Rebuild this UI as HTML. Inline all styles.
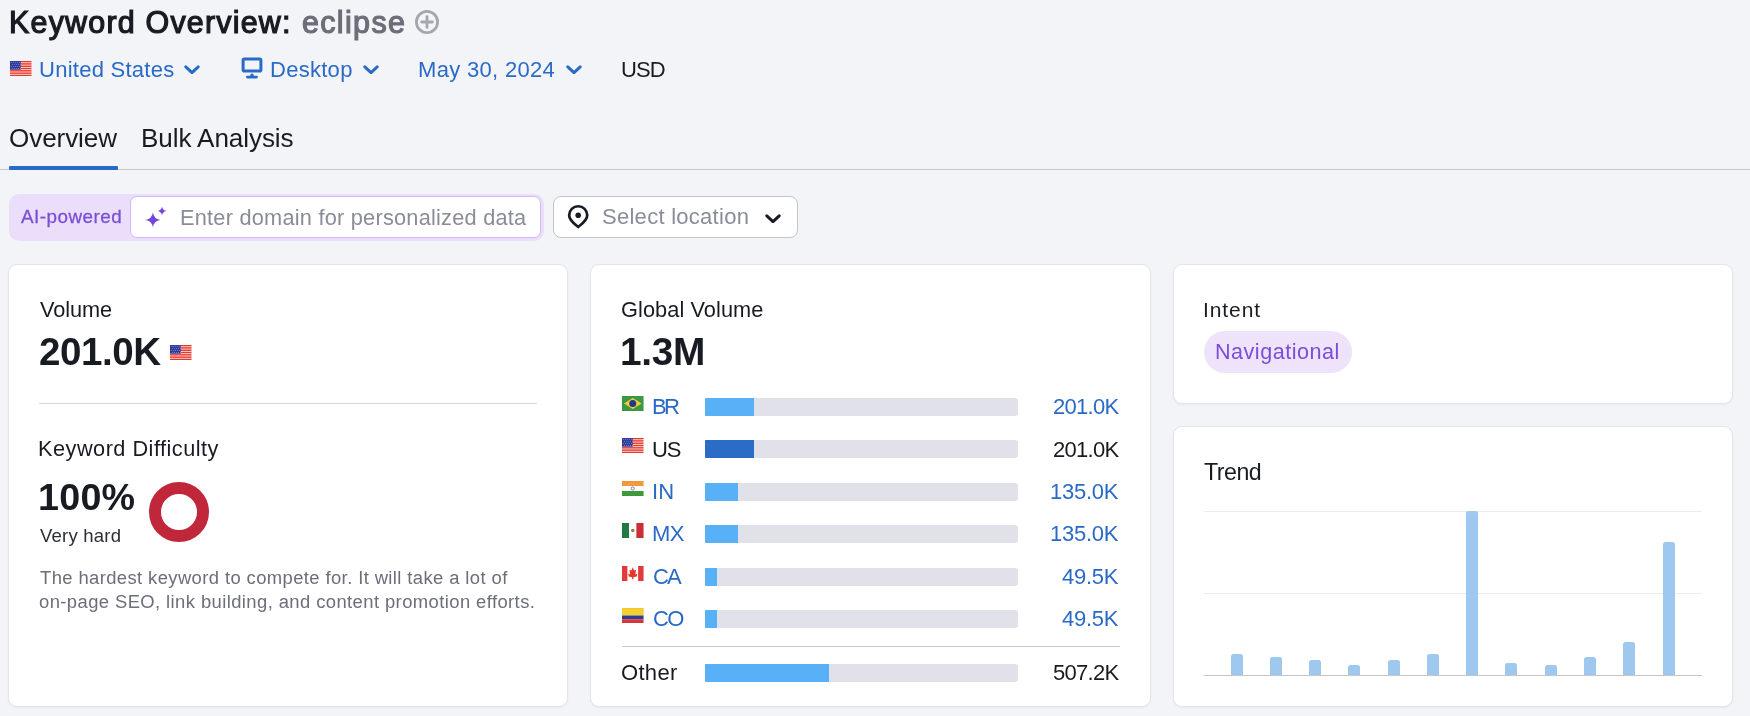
<!DOCTYPE html>
<html><head><meta charset="utf-8"><style>
html,body{margin:0;padding:0}
body{width:1750px;height:716px;overflow:hidden;background:#f3f4f8;position:relative;font-family:"Liberation Sans",sans-serif}
.a{position:absolute}
.t{position:absolute;white-space:nowrap;will-change:transform}
.card{background:#fff;border-radius:9px;box-sizing:border-box;border:1px solid #e4e5eb;box-shadow:0 1px 2px rgba(0,0,0,0.05)}
.bar{width:313px;height:18px;background:#e0e1e9;border-radius:1px 3px 3px 1px;overflow:hidden}
.fill{height:18px}
</style></head><body>
<div class="t" style="left:9.17px;top:7.00px;font-size:30.43px;line-height:30.43px;letter-spacing:1.214px;color:#191b23;-webkit-text-stroke:1.2px #191b23;">Keyword Overview:</div>
<div class="t" style="left:302.38px;top:7.00px;font-size:30.43px;line-height:30.43px;letter-spacing:1.364px;color:#6c6e79;-webkit-text-stroke:1.2px #6c6e79;">eclipse</div>
<svg class="a" style="left:414px;top:9px" width="26" height="26" viewBox="0 0 26 26"><circle cx="13" cy="13" r="10.6" fill="none" stroke="#a5a6af" stroke-width="2.8"/><path d="M13 7.6v10.8M7.6 13h10.8" stroke="#a5a6af" stroke-width="2.8" stroke-linecap="round"/></svg>
<svg class="a" style="left:10px;top:61px" width="21.5" height="15" viewBox="0 0 22 15" preserveAspectRatio="none"><rect width="22" height="15" fill="#fbe3df"/><rect y="-0.10" width="22" height="1.4" fill="#e6392c"/><rect y="2.21" width="22" height="1.4" fill="#e6392c"/><rect y="4.52" width="22" height="1.4" fill="#e6392c"/><rect y="6.82" width="22" height="1.4" fill="#e6392c"/><rect y="9.13" width="22" height="1.4" fill="#e6392c"/><rect y="11.44" width="22" height="1.4" fill="#e6392c"/><rect y="13.75" width="22" height="1.4" fill="#e6392c"/><rect width="10.95" height="8.7" fill="#2f3a9c"/><circle cx="1.30" cy="1.20" r="0.5" fill="#8d96d4"/><circle cx="3.40" cy="1.20" r="0.5" fill="#8d96d4"/><circle cx="5.50" cy="1.20" r="0.5" fill="#8d96d4"/><circle cx="7.60" cy="1.20" r="0.5" fill="#8d96d4"/><circle cx="9.70" cy="1.20" r="0.5" fill="#8d96d4"/><circle cx="2.35" cy="3.30" r="0.5" fill="#8d96d4"/><circle cx="4.45" cy="3.30" r="0.5" fill="#8d96d4"/><circle cx="6.55" cy="3.30" r="0.5" fill="#8d96d4"/><circle cx="8.65" cy="3.30" r="0.5" fill="#8d96d4"/><circle cx="10.75" cy="3.30" r="0.5" fill="#8d96d4"/><circle cx="1.30" cy="5.40" r="0.5" fill="#8d96d4"/><circle cx="3.40" cy="5.40" r="0.5" fill="#8d96d4"/><circle cx="5.50" cy="5.40" r="0.5" fill="#8d96d4"/><circle cx="7.60" cy="5.40" r="0.5" fill="#8d96d4"/><circle cx="9.70" cy="5.40" r="0.5" fill="#8d96d4"/><circle cx="2.35" cy="7.50" r="0.5" fill="#8d96d4"/><circle cx="4.45" cy="7.50" r="0.5" fill="#8d96d4"/><circle cx="6.55" cy="7.50" r="0.5" fill="#8d96d4"/><circle cx="8.65" cy="7.50" r="0.5" fill="#8d96d4"/><circle cx="10.75" cy="7.50" r="0.5" fill="#8d96d4"/></svg>
<div class="t" style="left:38.85px;top:59.00px;font-size:22.03px;line-height:22.03px;letter-spacing:0.253px;color:#2a6ac7;">United States</div>
<svg class="a" style="left:184px;top:64.5px" width="16" height="9.4" viewBox="0 0 16 9.4"><path d="M1.8 1.8 L8.0 7.6000000000000005 L14.2 1.8" fill="none" stroke="#2a6ac7" stroke-width="3" stroke-linecap="round" stroke-linejoin="round"/></svg>
<svg class="a" style="left:236px;top:52px" width="32" height="32" viewBox="0 0 32 32"><rect x="7.1" y="6.9" width="17.8" height="12.2" rx="1.3" fill="none" stroke="#2a6ac7" stroke-width="3"/><rect x="14.3" y="21.6" width="3.4" height="3.5" rx="1.6" fill="#2a6ac7"/><rect x="10" y="23.7" width="11.9" height="2.8" rx="1.4" fill="#2a6ac7"/></svg>
<div class="t" style="left:270.04px;top:59.00px;font-size:22.03px;line-height:22.03px;letter-spacing:0.268px;color:#2a6ac7;">Desktop</div>
<svg class="a" style="left:363px;top:64.5px" width="16" height="9.4" viewBox="0 0 16 9.4"><path d="M1.8 1.8 L8.0 7.6000000000000005 L14.2 1.8" fill="none" stroke="#2a6ac7" stroke-width="3" stroke-linecap="round" stroke-linejoin="round"/></svg>
<div class="t" style="left:417.94px;top:59.00px;font-size:22.03px;line-height:22.03px;letter-spacing:0.311px;color:#2a6ac7;">May 30, 2024</div>
<svg class="a" style="left:565.5px;top:64.5px" width="16" height="9.4" viewBox="0 0 16 9.4"><path d="M1.8 1.8 L8.0 7.6000000000000005 L14.2 1.8" fill="none" stroke="#2a6ac7" stroke-width="3" stroke-linecap="round" stroke-linejoin="round"/></svg>
<div class="t" style="left:621.25px;top:59.00px;font-size:22.03px;line-height:22.03px;letter-spacing:-0.919px;color:#191b23;">USD</div>
<div class="t" style="left:8.83px;top:125.00px;font-size:26.09px;line-height:26.09px;letter-spacing:-0.087px;color:#191b23;">Overview</div>
<div class="t" style="left:140.71px;top:125.00px;font-size:26.09px;line-height:26.09px;letter-spacing:-0.088px;color:#191b23;">Bulk Analysis</div>
<div class="a" style="left:0;top:169px;width:1750px;height:1px;background:#c7c8ce"></div>
<div class="a" style="left:9px;top:166px;width:109px;height:4px;background:#2a6ac7;border-radius:1px"></div>
<div class="a" style="left:9px;top:194px;width:535px;height:46.5px;background:#ebdefa;border-radius:10px"></div>
<div class="t" style="left:21.15px;top:208.00px;font-size:18.84px;line-height:18.84px;letter-spacing:0.484px;color:#7a4fd5;-webkit-text-stroke:0.3px #7a4fd5;">AI-powered</div>
<div class="a" style="left:130px;top:196px;width:411px;height:41.5px;box-sizing:border-box;background:#fff;border:1px solid #d2b8f7;border-radius:7px"></div>
<svg class="a" style="left:138px;top:200px" width="40" height="35" viewBox="138 200 40 35"><path d="M152.9 212.6 Q153.862 219.038 160.3 220 Q153.862 220.962 152.9 227.4 Q151.93800000000002 220.962 145.5 220 Q151.93800000000002 219.038 152.9 212.6Z M162 206.5 Q162.572 210.328 166.4 210.9 Q162.572 211.472 162 215.3 Q161.428 211.472 157.6 210.9 Q161.428 210.328 162 206.5Z" fill="#7445d9"/></svg>
<div class="t" style="left:179.76px;top:207.00px;font-size:21.74px;line-height:21.74px;letter-spacing:0.238px;color:#8a8c98;">Enter domain for personalized data</div>
<div class="a" style="left:553px;top:196px;width:245px;height:42px;box-sizing:border-box;background:#fff;border:1px solid #c4c5cc;border-radius:8px"></div>
<svg class="a" style="left:560px;top:200px" width="35" height="35" viewBox="560 200 35 35"><path d="M569.15 215.3 A9.05 9.05 0 0 1 587.25 215.3 C587.25 220.5 582 223.8 578.2 227 C574.4 223.8 569.15 220.5 569.15 215.3Z" fill="none" stroke="#191b23" stroke-width="2.7" stroke-linejoin="round"/><circle cx="578.2" cy="215.3" r="2.8" fill="#191b23"/></svg>
<div class="t" style="left:601.91px;top:206.00px;font-size:22.03px;line-height:22.03px;letter-spacing:0.266px;color:#8a8c98;">Select location</div>
<svg class="a" style="left:765px;top:213.5px" width="16" height="9.4" viewBox="0 0 16 9.4"><path d="M1.8 1.8 L8.0 7.6000000000000005 L14.2 1.8" fill="none" stroke="#191b23" stroke-width="3" stroke-linecap="round" stroke-linejoin="round"/></svg>
<div class="a card" style="left:8px;top:264px;width:560px;height:443px"></div>
<div class="a card" style="left:590px;top:264px;width:561px;height:443px"></div>
<div class="a card" style="left:1173px;top:264px;width:560px;height:140px"></div>
<div class="a card" style="left:1173px;top:426px;width:560px;height:281px"></div>
<div class="t" style="left:39.89px;top:299.00px;font-size:21.74px;line-height:21.74px;letter-spacing:-0.104px;color:#191b23;">Volume</div>
<div class="t" style="left:39.35px;top:333.00px;font-size:38.55px;line-height:38.55px;letter-spacing:-0.458px;color:#191b23;font-weight:bold;">201.0K</div>
<svg class="a" style="left:170px;top:345px" width="21.5" height="15" viewBox="0 0 22 15" preserveAspectRatio="none"><rect width="22" height="15" fill="#fbe3df"/><rect y="-0.10" width="22" height="1.4" fill="#e6392c"/><rect y="2.21" width="22" height="1.4" fill="#e6392c"/><rect y="4.52" width="22" height="1.4" fill="#e6392c"/><rect y="6.82" width="22" height="1.4" fill="#e6392c"/><rect y="9.13" width="22" height="1.4" fill="#e6392c"/><rect y="11.44" width="22" height="1.4" fill="#e6392c"/><rect y="13.75" width="22" height="1.4" fill="#e6392c"/><rect width="10.95" height="8.7" fill="#2f3a9c"/><circle cx="1.30" cy="1.20" r="0.5" fill="#8d96d4"/><circle cx="3.40" cy="1.20" r="0.5" fill="#8d96d4"/><circle cx="5.50" cy="1.20" r="0.5" fill="#8d96d4"/><circle cx="7.60" cy="1.20" r="0.5" fill="#8d96d4"/><circle cx="9.70" cy="1.20" r="0.5" fill="#8d96d4"/><circle cx="2.35" cy="3.30" r="0.5" fill="#8d96d4"/><circle cx="4.45" cy="3.30" r="0.5" fill="#8d96d4"/><circle cx="6.55" cy="3.30" r="0.5" fill="#8d96d4"/><circle cx="8.65" cy="3.30" r="0.5" fill="#8d96d4"/><circle cx="10.75" cy="3.30" r="0.5" fill="#8d96d4"/><circle cx="1.30" cy="5.40" r="0.5" fill="#8d96d4"/><circle cx="3.40" cy="5.40" r="0.5" fill="#8d96d4"/><circle cx="5.50" cy="5.40" r="0.5" fill="#8d96d4"/><circle cx="7.60" cy="5.40" r="0.5" fill="#8d96d4"/><circle cx="9.70" cy="5.40" r="0.5" fill="#8d96d4"/><circle cx="2.35" cy="7.50" r="0.5" fill="#8d96d4"/><circle cx="4.45" cy="7.50" r="0.5" fill="#8d96d4"/><circle cx="6.55" cy="7.50" r="0.5" fill="#8d96d4"/><circle cx="8.65" cy="7.50" r="0.5" fill="#8d96d4"/><circle cx="10.75" cy="7.50" r="0.5" fill="#8d96d4"/></svg>
<div class="a" style="left:39px;top:403px;width:498px;height:1px;background:#d4d5db"></div>
<div class="t" style="left:38.26px;top:438.00px;font-size:21.74px;line-height:21.74px;letter-spacing:0.479px;color:#191b23;">Keyword Difficulty</div>
<div class="t" style="left:37.74px;top:479.00px;font-size:37.68px;line-height:37.68px;letter-spacing:0.246px;color:#191b23;font-weight:bold;">100%</div>
<div class="t" style="left:39.91px;top:527.00px;font-size:18.55px;line-height:18.55px;letter-spacing:0.213px;color:#2b2d36;">Very hard</div>
<svg class="a" style="left:148px;top:481px" width="62" height="62" viewBox="0 0 62 62"><circle cx="31" cy="31" r="24" fill="none" stroke="#c1273a" stroke-width="12"/></svg>
<div class="t" style="left:39.73px;top:569.00px;font-size:18.41px;line-height:18.41px;letter-spacing:0.397px;color:#6c6e79;">The hardest keyword to compete for. It will take a lot of</div>
<div class="t" style="left:39.36px;top:593.00px;font-size:18.41px;line-height:18.41px;letter-spacing:0.412px;color:#6c6e79;">on-page SEO, link building, and content promotion efforts.</div>
<div class="t" style="left:620.91px;top:299.00px;font-size:21.74px;line-height:21.74px;letter-spacing:0.087px;color:#191b23;">Global Volume</div>
<div class="t" style="left:619.67px;top:333.00px;font-size:38.84px;line-height:38.84px;letter-spacing:-0.290px;color:#191b23;font-weight:bold;">1.3M</div>
<svg class="a" style="left:622px;top:396.0px" width="21.5" height="15" viewBox="0 0 22 15" preserveAspectRatio="none"><rect width="22" height="15" fill="#3a9a45"/><path d="M11 2 L20 7.5 L11 13 L2 7.5Z" fill="#f6cc3a"/><circle cx="11" cy="7.5" r="3.6" fill="#253787"/><rect x="0" y="0" width="22" height="15" fill="none" stroke="rgba(0,0,0,0.08)" stroke-width="0.6"/></svg>
<div class="t" style="left:652.24px;top:396.00px;font-size:22.03px;line-height:22.03px;letter-spacing:-2.657px;color:#2a6ac7;">BR</div>
<div class="a bar" style="left:705px;top:398.00px"><div class="fill" style="width:49px;background:#58b0f7"></div></div>
<div class="t" style="left:1052.70px;top:396.00px;font-size:22.03px;line-height:22.03px;letter-spacing:-0.742px;color:#2a6ac7;">201.0K</div>
<svg class="a" style="left:622px;top:438.42px" width="21.5" height="15" viewBox="0 0 22 15" preserveAspectRatio="none"><rect width="22" height="15" fill="#fbe3df"/><rect y="-0.10" width="22" height="1.4" fill="#e6392c"/><rect y="2.21" width="22" height="1.4" fill="#e6392c"/><rect y="4.52" width="22" height="1.4" fill="#e6392c"/><rect y="6.82" width="22" height="1.4" fill="#e6392c"/><rect y="9.13" width="22" height="1.4" fill="#e6392c"/><rect y="11.44" width="22" height="1.4" fill="#e6392c"/><rect y="13.75" width="22" height="1.4" fill="#e6392c"/><rect width="10.95" height="8.7" fill="#2f3a9c"/><circle cx="1.30" cy="1.20" r="0.5" fill="#8d96d4"/><circle cx="3.40" cy="1.20" r="0.5" fill="#8d96d4"/><circle cx="5.50" cy="1.20" r="0.5" fill="#8d96d4"/><circle cx="7.60" cy="1.20" r="0.5" fill="#8d96d4"/><circle cx="9.70" cy="1.20" r="0.5" fill="#8d96d4"/><circle cx="2.35" cy="3.30" r="0.5" fill="#8d96d4"/><circle cx="4.45" cy="3.30" r="0.5" fill="#8d96d4"/><circle cx="6.55" cy="3.30" r="0.5" fill="#8d96d4"/><circle cx="8.65" cy="3.30" r="0.5" fill="#8d96d4"/><circle cx="10.75" cy="3.30" r="0.5" fill="#8d96d4"/><circle cx="1.30" cy="5.40" r="0.5" fill="#8d96d4"/><circle cx="3.40" cy="5.40" r="0.5" fill="#8d96d4"/><circle cx="5.50" cy="5.40" r="0.5" fill="#8d96d4"/><circle cx="7.60" cy="5.40" r="0.5" fill="#8d96d4"/><circle cx="9.70" cy="5.40" r="0.5" fill="#8d96d4"/><circle cx="2.35" cy="7.50" r="0.5" fill="#8d96d4"/><circle cx="4.45" cy="7.50" r="0.5" fill="#8d96d4"/><circle cx="6.55" cy="7.50" r="0.5" fill="#8d96d4"/><circle cx="8.65" cy="7.50" r="0.5" fill="#8d96d4"/><circle cx="10.75" cy="7.50" r="0.5" fill="#8d96d4"/></svg>
<div class="t" style="left:652.35px;top:439.00px;font-size:22.03px;line-height:22.03px;letter-spacing:-1.067px;color:#191b23;">US</div>
<div class="a bar" style="left:705px;top:440.42px"><div class="fill" style="width:49px;background:#2b6cc6"></div></div>
<div class="t" style="left:1052.70px;top:439.00px;font-size:22.03px;line-height:22.03px;letter-spacing:-0.742px;color:#191b23;">201.0K</div>
<svg class="a" style="left:622px;top:480.84000000000003px" width="21.5" height="15" viewBox="0 0 22 15" preserveAspectRatio="none"><rect width="22" height="5" fill="#f39a3b"/><rect y="5" width="22" height="5" fill="#fff"/><rect y="10" width="22" height="5" fill="#3e9a3a"/><circle cx="11" cy="7.5" r="1.6" fill="none" stroke="#2a3a8a" stroke-width="0.6"/><rect x="0" y="0" width="22" height="15" fill="none" stroke="rgba(0,0,0,0.08)" stroke-width="0.6"/></svg>
<div class="t" style="left:652.02px;top:481.00px;font-size:22.03px;line-height:22.03px;letter-spacing:0.116px;color:#2a6ac7;">IN</div>
<div class="a bar" style="left:705px;top:482.84px"><div class="fill" style="width:33px;background:#58b0f7"></div></div>
<div class="t" style="left:1050.35px;top:481.00px;font-size:22.03px;line-height:22.03px;letter-spacing:-0.272px;color:#2a6ac7;">135.0K</div>
<svg class="a" style="left:622px;top:523.26px" width="21.5" height="15" viewBox="0 0 22 15" preserveAspectRatio="none"><rect width="7.3" height="15" fill="#1f7a43"/><rect x="7.3" width="7.4" height="15" fill="#fff"/><rect x="14.7" width="7.3" height="15" fill="#cf2c39"/><circle cx="11" cy="7.5" r="1.8" fill="#9a7a4a"/><rect x="0" y="0" width="22" height="15" fill="none" stroke="rgba(0,0,0,0.08)" stroke-width="0.6"/></svg>
<div class="t" style="left:652.24px;top:523.00px;font-size:22.03px;line-height:22.03px;letter-spacing:-0.641px;color:#2a6ac7;">MX</div>
<div class="a bar" style="left:705px;top:525.26px"><div class="fill" style="width:33px;background:#58b0f7"></div></div>
<div class="t" style="left:1050.35px;top:523.00px;font-size:22.03px;line-height:22.03px;letter-spacing:-0.272px;color:#2a6ac7;">135.0K</div>
<svg class="a" style="left:622px;top:565.6800000000001px" width="21.5" height="15" viewBox="0 0 22 15" preserveAspectRatio="none"><rect width="22" height="15" fill="#fff"/><rect width="5.5" height="15" fill="#e13b3b"/><rect x="16.5" width="5.5" height="15" fill="#e13b3b"/><path transform="translate(11 7.2) scale(1.35) translate(-11 -7.5)" d="M11 3 L12 5.5 L13.5 5 L13 8.5 L14.5 7.8 L14 10 L11.5 10.5 L11.5 12 L10.5 12 L10.5 10.5 L8 10 L7.5 7.8 L9 8.5 L8.5 5 L10 5.5Z" fill="#e8352a"/><rect x="0" y="0" width="22" height="15" fill="none" stroke="rgba(0,0,0,0.08)" stroke-width="0.6"/></svg>
<div class="t" style="left:652.90px;top:566.00px;font-size:22.03px;line-height:22.03px;letter-spacing:-1.909px;color:#2a6ac7;">CA</div>
<div class="a bar" style="left:705px;top:567.68px"><div class="fill" style="width:12px;background:#58b0f7"></div></div>
<div class="t" style="left:1062.36px;top:566.00px;font-size:22.03px;line-height:22.03px;letter-spacing:-0.259px;color:#2a6ac7;">49.5K</div>
<svg class="a" style="left:622px;top:608.1px" width="21.5" height="15" viewBox="0 0 22 15" preserveAspectRatio="none"><rect width="22" height="7.5" fill="#f6cf2f"/><rect y="7.5" width="22" height="3.75" fill="#2a3e94"/><rect y="11.25" width="22" height="3.75" fill="#d9343a"/><rect x="0" y="0" width="22" height="15" fill="none" stroke="rgba(0,0,0,0.08)" stroke-width="0.6"/></svg>
<div class="t" style="left:652.90px;top:608.00px;font-size:22.03px;line-height:22.03px;letter-spacing:-1.741px;color:#2a6ac7;">CO</div>
<div class="a bar" style="left:705px;top:610.10px"><div class="fill" style="width:12px;background:#58b0f7"></div></div>
<div class="t" style="left:1062.36px;top:608.00px;font-size:22.03px;line-height:22.03px;letter-spacing:-0.259px;color:#2a6ac7;">49.5K</div>
<div class="a" style="left:622px;top:646px;width:498px;height:1px;background:#c7c8ce"></div>
<div class="t" style="left:621.01px;top:662.00px;font-size:22.03px;line-height:22.03px;letter-spacing:0.312px;color:#191b23;">Other</div>
<div class="a bar" style="left:705px;top:663.7px"><div class="fill" style="width:124px;background:#58b0f7"></div></div>
<div class="t" style="left:1052.52px;top:662.00px;font-size:22.03px;line-height:22.03px;letter-spacing:-0.706px;color:#191b23;">507.2K</div>
<div class="t" style="left:1202.81px;top:299.00px;font-size:21.01px;line-height:21.01px;letter-spacing:0.912px;color:#191b23;">Intent</div>
<div class="a" style="left:1204px;top:331px;width:148px;height:42px;border-radius:21px;background:#efe2fb"></div>
<div class="t" style="left:1215.47px;top:341.00px;font-size:21.59px;line-height:21.59px;letter-spacing:0.497px;color:#7a4fd5;">Navigational</div>
<div class="t" style="left:1203.54px;top:461.00px;font-size:23.19px;line-height:23.19px;letter-spacing:-0.510px;color:#191b23;">Trend</div>
<div class="a" style="left:1204px;top:511px;width:498px;height:1px;background:#ebebf0"></div>
<div class="a" style="left:1204px;top:593px;width:498px;height:1px;background:#ebebf0"></div>
<div class="a" style="left:1204px;top:675px;width:498px;height:1.3px;background:#c4c5cc"></div>
<div class="a" style="left:1231.2px;top:653.7px;width:12px;height:21.3px;background:#9fc8ee;border-radius:2.5px 2.5px 0 0"></div>
<div class="a" style="left:1270.0px;top:657.0px;width:12px;height:18.0px;background:#9fc8ee;border-radius:2.5px 2.5px 0 0"></div>
<div class="a" style="left:1309.0px;top:659.7px;width:12px;height:15.3px;background:#9fc8ee;border-radius:2.5px 2.5px 0 0"></div>
<div class="a" style="left:1348.1px;top:664.7px;width:12px;height:10.3px;background:#9fc8ee;border-radius:2.5px 2.5px 0 0"></div>
<div class="a" style="left:1388.0px;top:659.7px;width:12px;height:15.3px;background:#9fc8ee;border-radius:2.5px 2.5px 0 0"></div>
<div class="a" style="left:1427.0px;top:653.7px;width:12px;height:21.3px;background:#9fc8ee;border-radius:2.5px 2.5px 0 0"></div>
<div class="a" style="left:1466.0px;top:511.0px;width:12px;height:164.0px;background:#9fc8ee;border-radius:2.5px 2.5px 0 0"></div>
<div class="a" style="left:1505.0px;top:663.1px;width:12px;height:11.9px;background:#9fc8ee;border-radius:2.5px 2.5px 0 0"></div>
<div class="a" style="left:1545.0px;top:665.1px;width:12px;height:9.9px;background:#9fc8ee;border-radius:2.5px 2.5px 0 0"></div>
<div class="a" style="left:1584.0px;top:657.0px;width:12px;height:18.0px;background:#9fc8ee;border-radius:2.5px 2.5px 0 0"></div>
<div class="a" style="left:1623.0px;top:642.2px;width:12px;height:32.8px;background:#9fc8ee;border-radius:2.5px 2.5px 0 0"></div>
<div class="a" style="left:1663.0px;top:541.9px;width:12px;height:133.1px;background:#9fc8ee;border-radius:2.5px 2.5px 0 0"></div>
</body></html>
